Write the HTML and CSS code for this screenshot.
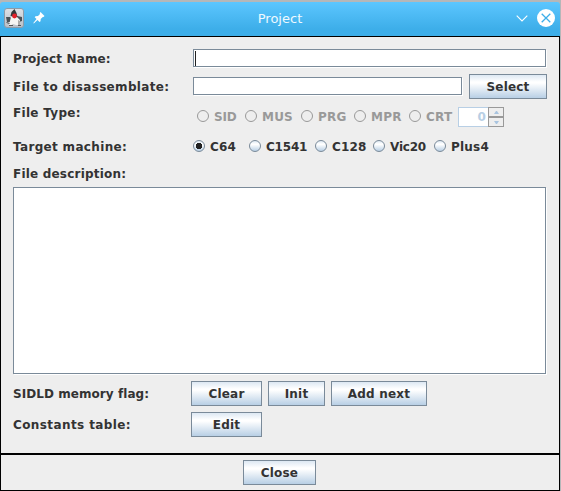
FILE: index.html
```
<!DOCTYPE html>
<html lang="en">
<head>
<meta charset="utf-8">
<title>Project</title>
<link rel="stylesheet" href="styles.css">
</head>
<body>
<div class="window">
  <header class="titlebar">
    <svg class="app-icon" width="20" height="20" viewBox="0 0 20 20">
      <defs><linearGradient id="tile" x2="0" y2="1"><stop offset="0" stop-color="#dde1e6"/><stop offset="1" stop-color="#b9c0c8"/></linearGradient></defs>
      <rect x=".5" y=".5" width="19" height="19" rx="2.500" fill="url(#tile)" stroke="#8d9ba8"/>
      <path d="M2 9h4l2 2-1 3-4 0zM13 8l5 1 0 4-3 1-2-1z" fill="#4a5257"/>
      <path d="M7 9h6l3 3 0 5-4 0-3-1-3 2-1-1z" fill="#f5f5f3"/>
      <path d="M14 12l2 1 0 4-2 0z" fill="#aaa"/>
      <path d="M10.500 1l2 4 1 4-7-1 1-4z" fill="#34383b"/>
      <circle cx="10.500" cy="8" r="2.400" fill="#e3202a"/>
      <path d="M2.500 14.500l3 1M5 17.500h4M14 17.500h3" stroke="#555"/>
    </svg>
    <svg class="pin" width="12" height="12" viewBox="0 0 12 12"><path d="M7.500 0L11.500 4L10.500 5L9.800 4.900L7.700 7L7.500 9.300L6.500 10L4.500 8L.8 11.500L.3 11L3.500 7L1.700 5.200L2.500 4.300L5 4L7 2L6.700 1z" fill="#fff"/></svg>
    <h1 class="title">Project</h1>
    <svg class="shade" width="12" height="7" viewBox="0 0 12 7"><path d="M.7 .7L6 6L11.300 .7" fill="none" stroke="#fff" stroke-width="1.100"/></svg>
    <svg class="close" width="18" height="18" viewBox="0 0 18 18"><circle cx="9" cy="9" r="9" fill="#fff"/><path d="M4.700 4.700l8.600 8.600M13.300 4.700l-8.600 8.600" stroke="#3daee9" stroke-width="1.300"/></svg>
  </header>
  <main class="form">
    <div class="row row-name"><label class="label">Project Name:</label><div class="field"><i class="caret"></i></div></div>
    <div class="row row-file"><label class="label">File to disassemblate:</label><div class="field"></div><button class="btn select">Select</button></div>
    <div class="row row-type"><label class="label">File Type:</label>
      <div class="radios disabled">
        <span class="radio r48 tight"><i></i>SID</span><span class="radio r56"><i></i>MUS</span><span class="radio r53"><i></i>PRG</span><span class="radio r55"><i></i>MPR</span><span class="radio r49"><i></i>CRT</span>
        <div class="spinner"><span class="value">0</span><span class="arrows"><b><svg width="5" height="3" viewBox="0 0 5 3"><path d="M0 3L2 0H3L5 3z"/></svg></b><b><svg width="5" height="3" viewBox="0 0 5 3"><path d="M0 0L2 3H3L5 0z"/></svg></b></span></div>
      </div>
    </div>
    <div class="row row-target"><label class="label">Target machine:</label>
      <div class="radios">
        <span class="radio r56"><i class="on"></i>C64</span><span class="radio r66 tight"><i></i>C1541</span><span class="radio r58"><i></i>C128</span><span class="radio r61 tight"><i></i>Vic20</span><span class="radio"><i></i>Plus4</span>
      </div>
    </div>
    <div class="row row-desc"><label class="label">File description:</label></div>
    <div class="field area"></div>
    <div class="row row-flag"><label class="label">SIDLD memory flag:</label><button class="btn w71">Clear</button><button class="btn w57">Init</button><button class="btn w96">Add next</button></div>
    <div class="row row-const"><label class="label">Constants table:</label><button class="btn w71">Edit</button></div>
  </main>
  <footer class="footer"><button class="btn w73">Close</button></footer>
</div>
</body>
</html>
```
FILE: styles.css
```
* { box-sizing: border-box; }
body {
  margin: 0;
  width: 561px;
  height: 491px;
  overflow: hidden;
  padding: 2px 1px 0 0;
  background: #b5b7b9;
  font: bold 12px/14px "DejaVu Sans", sans-serif;
  letter-spacing: 0.2px;
  color: #333;
  white-space: nowrap;
}
.window { height: 489px; display: flex; flex-direction: column; }
.titlebar {
  height: 34px;
  display: flex;
  padding-left: 4px;
  border-radius: 3px 3px 0 0;
  background: linear-gradient(#5cc6ff, #3daee9 80%);
}
.app-icon { margin-top: 6px; }
.pin { margin: 10px 0 0 9px; }
.title {
  margin: 9px 0 0;
  width: 470px;
  text-align: center;
  font: 13px/15px "DejaVu Sans", sans-serif;
  letter-spacing: 0;
  color: #eff9ff;
}
.shade { margin: 13px 0 0 1px; }
.close { margin: 7px 0 0 9px; }
.form {
  height: 418px;
  border: 1px solid #000;
  padding: 12px 13px 0 12px;
  background: #eee;
}
.row { display: flex; align-items: flex-start; }
.label { width: 180px; flex: none; padding-top: 3px; }
.field {
  flex: 1;
  height: 18px;
  background: #fff;
  border: 1px solid #7a8a99;
  box-shadow: 1px 1px #fff;
}
.row-name { height: 25px; }
.row-name .label { letter-spacing: 0.15px; }
.caret { display: block; width: 1px; height: 15px; margin: 1px 0 0 1px; background: #222; }
.row-file { height: 33px; }
.row-file .field, .row-file .label { margin-top: 3px; }
.row-file .label { letter-spacing: 0.32px; }
.btn {
  height: 25px;
  flex: none;
  margin: 0;
  padding: 0;
  border: 1px solid #7a8a99;
  background: linear-gradient(#dde8f3, #fff 30%, #fff 35%, #b8cfe5);
  font: inherit;
  letter-spacing: inherit;
  color: #333;
  text-align: center;
}
.select { width: 78px; margin: 0 -1px 0 7px; }
.row-type { height: 30px; }
.row-type .label { padding-top: 0; margin-top: -1px; letter-spacing: 0.3px; }
.row-type .radios { padding-left: 4px; color: #999; }
.radios { display: flex; align-items: flex-start; }
.radio { display: flex; align-items: flex-start; gap: 5px; height: 14px; margin-top: 3px; }
.radio i {
  width: 12px;
  height: 12px;
  border: 1px solid #7a8a99;
  border-radius: 50%;
  background: linear-gradient(#dde8f3, #fff 30%, #fff 35%, #b8cfe5);
}
.radio i.on { background: radial-gradient(circle, #222 0 3px, transparent 3.5px), linear-gradient(#dde8f3, #fff 35%, #b8cfe5); }
.disabled .radio i { border-color: #999; background: none; }
.tight { letter-spacing: -0.2px; }
.r48 { width: 48px; }
.r49 { width: 49px; }
.r53 { width: 53px; }
.r55 { width: 55px; }
.r56 { width: 56px; }
.r58 { width: 58px; }
.r61 { width: 61px; }
.r66 { width: 66px; }
.spinner { display: flex; width: 46px; height: 20px; color: #b8cfe5; }
.value {
  width: 30px;
  background: #fff;
  border: 1px solid #b8cfe5;
  border-right: 0;
  text-align: right;
  padding: 2px 2px 0 0;
}
.arrows { width: 16px; display: flex; flex-direction: column; }
.arrows b { height: 10px; border: 1px solid #999; display: flex; align-items: center; justify-content: center; }
.arrows svg { fill: #a9c4df; }
.row-target { height: 29px; }
.row-target .label { letter-spacing: 0.33px; }
.row-desc { height: 21px; }
.row-desc .label { padding-top: 1px; }
.area { height: 187px; }
.row-flag { height: 31px; margin-top: 7px; gap: 6px; }
.row-flag .label { width: 172px; padding-top: 6px; letter-spacing: 0.06px; }
.row-const .label { width: 178px; padding-top: 6px; letter-spacing: 0.4px; }
.w57 { width: 57px; }
.w71 { width: 71px; }
.w73 { width: 73px; }
.w96 { width: 96px; }
.footer {
  height: 37px;
  border: 1px solid #000;
  background: #eee;
  display: flex;
  justify-content: center;
  padding: 5px 1px 0 0;
}
```
